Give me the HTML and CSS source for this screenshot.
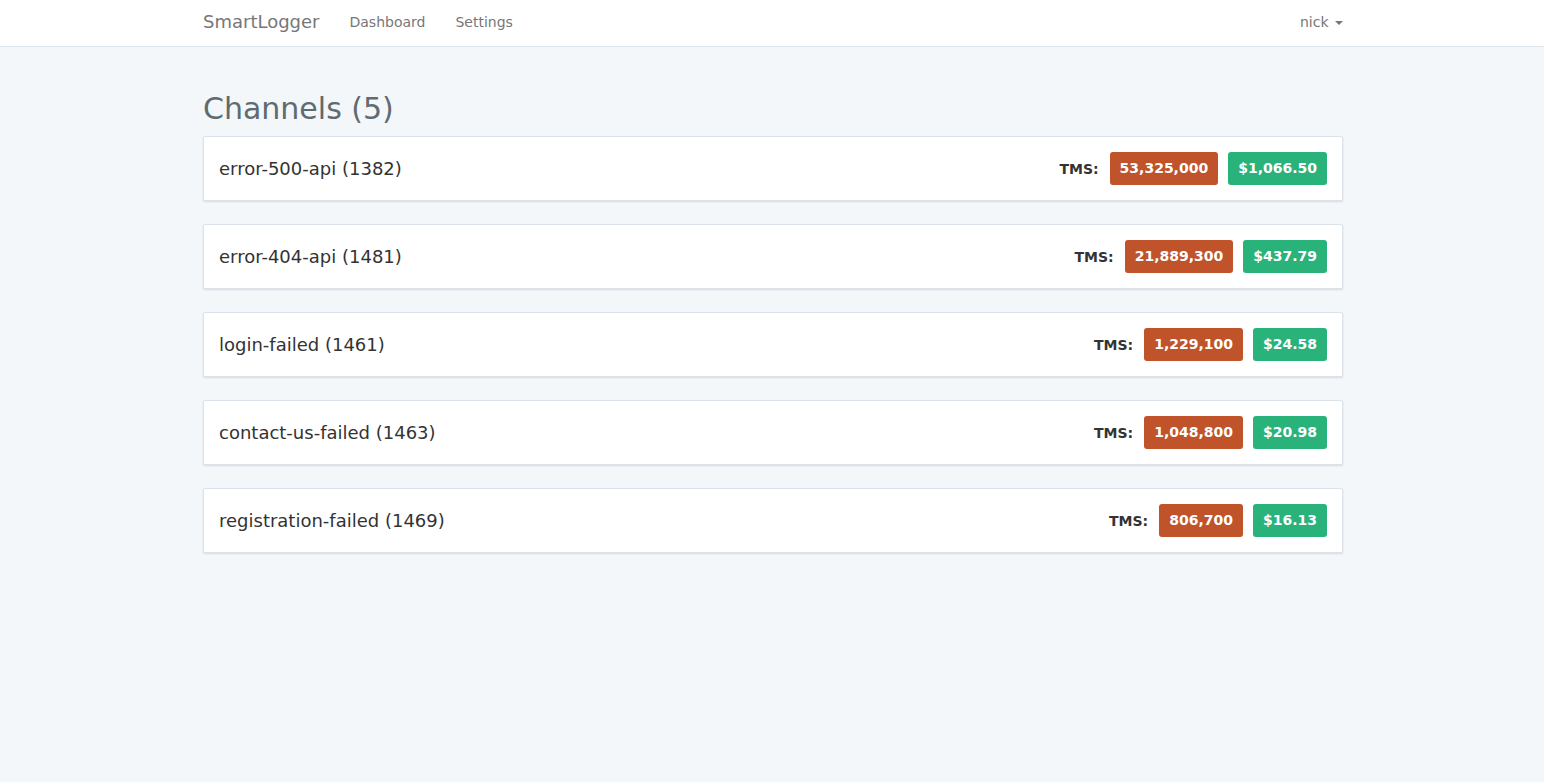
FILE: index.html
```html
<!DOCTYPE html>
<html lang="en">
<head>
    <meta charset="UTF-8">
    <meta name="viewport" content="width=device-width, initial-scale=1.0">
    <title>SmartLogger - Channels</title>
    <link rel="stylesheet" href="styles.css">
</head>
<body>
    <nav class="navbar">
        <div class="container navbar-inner">
            <div class="navbar-left">
                <a class="brand" href="#">SmartLogger</a>
                <a class="nav-link" href="#">Dashboard</a>
                <a class="nav-link" href="#">Settings</a>
            </div>
            <a class="nav-link user" href="#">nick <span class="caret"></span></a>
        </div>
    </nav>

    <div class="container main">
        <h1>Channels (5)</h1>

        <div class="channel">
            <div class="channel-name">error-500-api (1382)</div>
            <div class="channel-stats">
                <span class="tms">TMS:</span>
                <span class="badge badge-count">53,325,000</span>
                <span class="badge badge-cost">$1,066.50</span>
            </div>
        </div>

        <div class="channel">
            <div class="channel-name">error-404-api (1481)</div>
            <div class="channel-stats">
                <span class="tms">TMS:</span>
                <span class="badge badge-count">21,889,300</span>
                <span class="badge badge-cost">$437.79</span>
            </div>
        </div>

        <div class="channel">
            <div class="channel-name">login-failed (1461)</div>
            <div class="channel-stats">
                <span class="tms">TMS:</span>
                <span class="badge badge-count">1,229,100</span>
                <span class="badge badge-cost">$24.58</span>
            </div>
        </div>

        <div class="channel">
            <div class="channel-name">contact-us-failed (1463)</div>
            <div class="channel-stats">
                <span class="tms">TMS:</span>
                <span class="badge badge-count">1,048,800</span>
                <span class="badge badge-cost">$20.98</span>
            </div>
        </div>

        <div class="channel">
            <div class="channel-name">registration-failed (1469)</div>
            <div class="channel-stats">
                <span class="tms">TMS:</span>
                <span class="badge badge-count">806,700</span>
                <span class="badge badge-cost">$16.13</span>
            </div>
        </div>
    </div>
</body>
</html>
```

FILE: styles.css
```css
body {
    margin: 0;
    font-family: "DejaVu Sans", sans-serif;
    font-size: 14px;
    color: #333;
    background-color: #f4f7fa;
}

.container {
    width: 1142px;
    padding-left: 2px;
    margin: 0 auto;
    box-sizing: border-box;
}

.navbar {
    background-color: #fff;
    border-bottom: 1px solid #dce4ec;
    height: 47px;
    box-sizing: border-box;
}

.navbar-inner {
    display: flex;
    justify-content: space-between;
    align-items: center;
    height: 100%;
    padding-bottom: 3px;
}

.navbar-left {
    display: flex;
    align-items: center;
    gap: 30px;
}

.navbar a {
    text-decoration: none;
    color: #777;
}

.brand {
    font-size: 18px;
}

.nav-link {
    font-size: 14px;
}

.caret {
    display: inline-block;
    width: 0;
    height: 0;
    margin-left: 2px;
    vertical-align: middle;
    border-top: 4px solid #777;
    border-left: 4px solid transparent;
    border-right: 4px solid transparent;
}

.main {
    padding-top: 45px;
}

h1 {
    font-size: 30px;
    font-weight: normal;
    line-height: 33px;
    color: #5f6b70;
    margin: 0 0 11px;
}

.channel {
    display: flex;
    justify-content: space-between;
    align-items: center;
    background-color: #fff;
    border: 1px solid #dbe2ea;
    border-radius: 2px;
    box-shadow: 0 1px 2px rgba(0, 0, 0, 0.12);
    padding: 15px;
    margin-bottom: 23px;
}

.channel-name {
    font-size: 18px;
    color: #333;
}

.channel-stats {
    display: flex;
    align-items: center;
    gap: 10px;
}

.tms {
    font-weight: bold;
    font-size: 14px;
    color: #333;
    margin-right: 1px;
}

.badge {
    display: inline-block;
    height: 33px;
    line-height: 33px;
    padding: 0 10px;
    border-radius: 3px;
    font-weight: bold;
    font-size: 14px;
    color: #fff;
}

.badge-count {
    background-color: #c0532a;
}

.badge-cost {
    background-color: #2ab27b;
}
```
